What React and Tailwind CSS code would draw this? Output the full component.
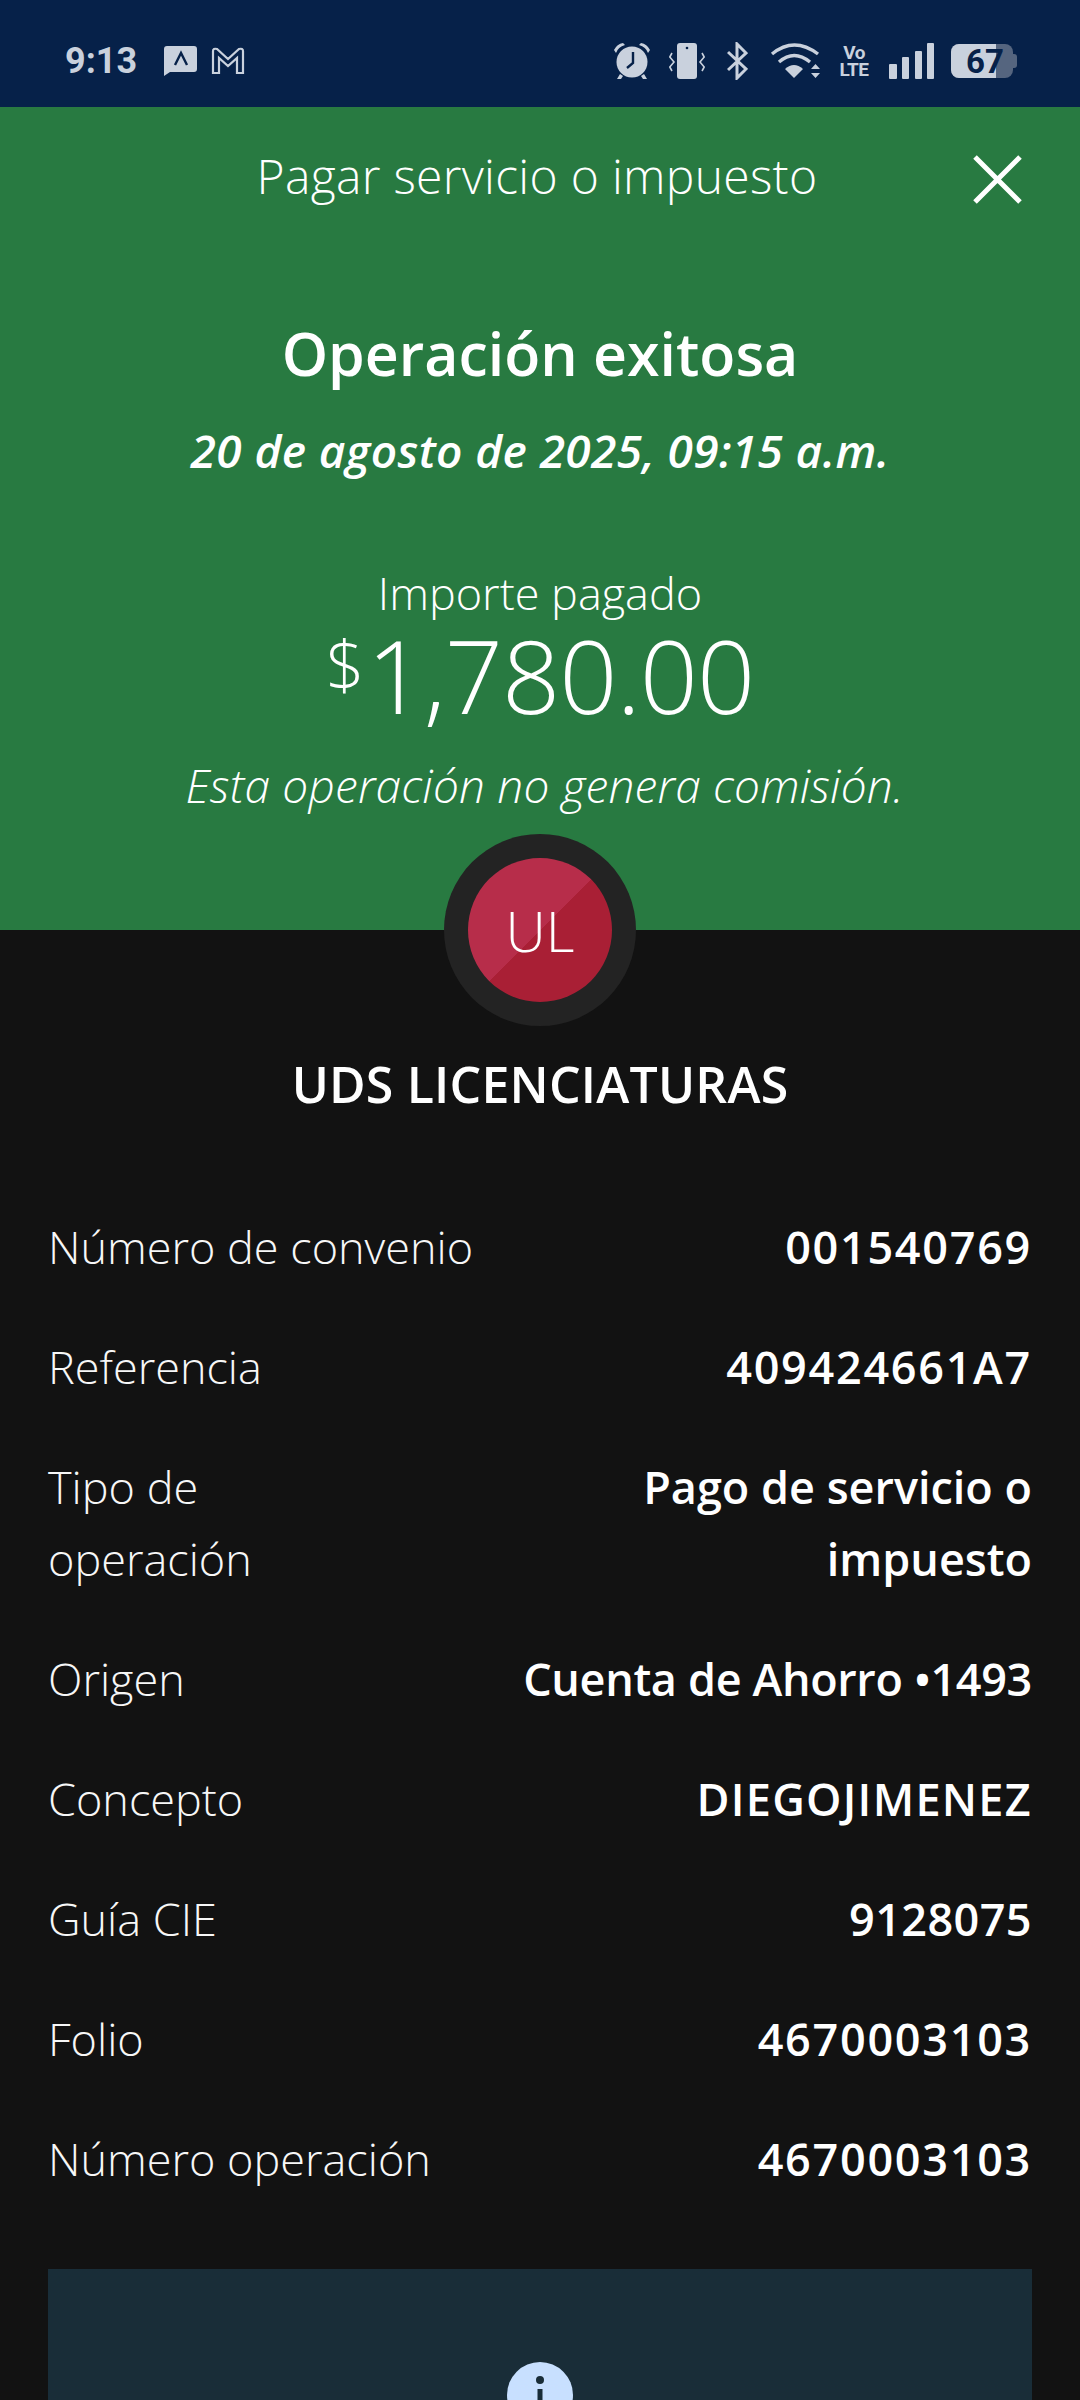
import React from 'react';

const rows = [
  { label: 'Número de convenio', value: '001540769', track: 'tracking-[1.7px]' },
  { label: 'Referencia', value: '409424661A7', track: 'tracking-[1.7px]' },
  { label: 'Tipo de operación', value: 'Pago de servicio o impuesto', wrap: true },
  { label: 'Origen', value: 'Cuenta de Ahorro •1493', track: 'tracking-[-0.35px]' },
  { label: 'Concepto', value: 'DIEGOJIMENEZ', track: 'tracking-[1.3px]' },
  { label: 'Guía CIE', value: '9128075', track: 'tracking-[0.4px]' },
  { label: 'Folio', value: '4670003103', track: 'tracking-[1.7px]' },
  { label: 'Número operación', value: '4670003103', track: 'tracking-[1.7px]' },
];

const StatusIcons = () => (
  <div className="flex items-center text-[#c9d1dd]">
    {/* alarm */}
    <svg width="38" height="38" viewBox="0 0 38 38" fill="currentColor">
      <circle cx="19" cy="20" r="15.5" />
      <path d="M1 8 Q4 2 10 1 L12 3 Q5 5 3 11 Z M37 8 Q34 2 28 1 L26 3 Q33 5 35 11 Z" />
      <path d="M7 32 L4 37 L8 37 L10 34 Z M31 32 L34 37 L30 37 L28 34 Z" />
      <path d="M20 10 L20 21 L14 26" fill="none" stroke="#062149" strokeWidth="2.4" />
    </svg>
    {/* vibrate */}
    <svg className="ml-[18px]" width="36" height="38" viewBox="0 0 36 38" fill="currentColor">
      <rect x="8" y="1" width="20" height="36" rx="3" />
      <circle cx="18" cy="6" r="1.3" fill="#062149" />
      <path d="M3 11 L0.8 15 L5 20 L0.8 25 L3 29 M33 11 L35.2 15 L31 20 L35.2 25 L33 29" fill="none" stroke="currentColor" strokeWidth="1.6" />
    </svg>
    {/* bluetooth */}
    <svg className="ml-[22px]" width="21" height="38" viewBox="0 0 21 38" fill="none" stroke="currentColor" strokeWidth="3">
      <path d="M1 10 L19 27 L10 36 L10 2 L19 11 L1 28" />
    </svg>
    {/* wifi */}
    <svg className="ml-[22px]" width="52" height="38" viewBox="0 0 52 38" fill="none" stroke="currentColor" strokeWidth="3.4">
      <path d="M2 12 Q24 -6 48 12" />
      <path d="M9 20 Q24 7 40 20" />
      <path d="M24 36 L15 27 Q24 19 33 27 Z" fill="currentColor" stroke="none" />
      <path d="M41 27 L45.5 22 L50 27 Z M41 31 L50 31 L45.5 36 Z" fill="currentColor" stroke="none" />
    </svg>
    {/* VoLTE */}
    <div className="ml-[16px] flex flex-col items-center font-['Roboto',sans-serif] font-bold text-[19px] leading-[17px] w-[32px] tracking-[-0.5px]">
      <span>Vo</span>
      <span>LTE</span>
    </div>
    {/* signal */}
    <svg className="ml-[19px]" width="46" height="38" viewBox="0 0 46 38" fill="currentColor">
      <rect x="0" y="22" width="8" height="15" rx="1" />
      <rect x="13" y="15" width="7" height="22" rx="1" />
      <rect x="26" y="9" width="7" height="28" rx="1" />
      <rect x="38" y="1" width="7" height="36" rx="1" />
    </svg>
    {/* battery */}
    <div className="relative w-[66px] h-[34px] ml-[16px]">
      <div className="absolute inset-y-0 left-0 w-[62px] rounded-[8px] bg-[#55657f]" />
      <div className="absolute right-0 top-[10px] w-[4px] h-[14px] rounded-r-[3px] bg-[#55657f]" />
      <div className="absolute inset-y-0 left-0 w-[45px] rounded-l-[8px] bg-[#c9d1dd]" />
      <span className="absolute left-[15px] top-0 font-['Roboto',sans-serif] font-bold text-[33px] leading-[36px] text-[#062149]">67</span>
    </div>
  </div>
);

const StatusBar = () => (
  <div className="h-[107px] bg-[#062149] flex items-center justify-between pl-[65px] pr-[63px] pt-[15px]">
    <div className="flex items-center">
      <span className="font-['Roboto',sans-serif] font-bold text-[36px] text-[#c9d1dd] w-[99px]">9:13</span>
      {/* message bubble */}
      <svg width="34" height="32" viewBox="0 0 34 32" className="mr-[13px]">
        <path d="M3 1 H30 Q33 1 33 4 V24 Q33 27 30 27 H6 L0 31 V4 Q0 1 3 1 Z" fill="#c9d1dd" />
        <path d="M11 20 L17 8 L23 20" fill="none" stroke="#062149" strokeWidth="2.4" />
      </svg>
      {/* gmail */}
      <svg width="34" height="28" viewBox="0 0 34 28" fill="none" stroke="#c9d1dd" strokeWidth="2.2">
        <path d="M2 26 V4 Q2 1 6 2 L17 12 L28 2 Q32 1 32 4 V26 H26 V11 L17 19 L8 11 V26 Z" />
      </svg>
    </div>
    <StatusIcons />
  </div>
);

const Row = ({ label, value, wrap, track }) => (
  <div className="flex justify-between py-[24px] text-[45px] leading-[72px]">
    <span className={`font-light text-[#f7f7f7] ${wrap ? 'w-[260px]' : ''}`}>{label}</span>
    <span className={`font-semibold text-white text-right ${track || ''} ${wrap ? 'w-[440px]' : ''}`}>{value}</span>
  </div>
);

export default function App() {
  return (
    <div className="w-[1080px] h-[2400px] overflow-hidden bg-[#121212] font-['Open_Sans',sans-serif] text-white">
      <StatusBar />

      <div className="h-[823px] bg-[#287a41] flex flex-col items-center relative">
        <div className="w-full flex justify-center pt-[37px] pr-[6px] text-[48px] leading-[64px] font-light tracking-[0.3px]">
          Pagar servicio o impuesto
        </div>
        <svg className="absolute right-[58px] top-[48px]" width="49" height="49" viewBox="0 0 49 49" fill="none" stroke="white" strokeWidth="5">
          <path d="M2 2 L47 47 M47 2 L2 47" />
        </svg>
        <h1 className="mt-[109px] text-[59px] leading-[72px] font-semibold">Operación exitosa</h1>
        <p className="mt-[31px] text-[46px] leading-[60px] font-semibold italic tracking-[0.4px]">20 de agosto de 2025, 09:15 a.m.</p>
        <p className="mt-[83px] text-[45px] leading-[60px] font-light">Importe pagado</p>
        <div className="flex items-start font-light leading-none -mt-[3px]">
          <span className="text-[68px] mt-[10px] mr-[2px]">$</span>
          <span className="text-[102px] leading-[110px] tracking-[-1px]">1,780.00</span>
        </div>
        <p className="mt-[25px] pl-[9px] text-[46px] leading-[60px] font-light italic tracking-[0.2px]">Esta operación no genera comisión.</p>
      </div>

      <div className="relative flex flex-col items-center -mt-[96px]">
        <div className="w-[192px] h-[192px] rounded-full bg-[#232323] flex items-center justify-center">
          <div className="w-[144px] h-[144px] rounded-full bg-[linear-gradient(135deg,#b72d4a_50%,#a91f35_50%)] flex items-center justify-center text-[56px] font-light">
            UL
          </div>
        </div>
        <div className="mt-[26px] text-[50px] leading-[64px] font-semibold tracking-[0.2px]">UDS LICENCIATURAS</div>
      </div>

      <div className="px-[48px] mt-[71px]">
        {rows.map((r) => (
          <Row key={r.label} label={r.label} value={r.value} wrap={r.wrap} track={r.track} />
        ))}
      </div>

      <div className="mx-[48px] mt-[50px] bg-[#192d38] h-[400px] flex justify-center pt-[93px]">
        <svg width="66" height="66" viewBox="0 0 66 66">
          <circle cx="33" cy="33" r="33" fill="#c8e0ff" />
          <circle cx="33" cy="18" r="4" fill="#192d38" />
          <rect x="30.5" y="27" width="5" height="24" fill="#192d38" />
        </svg>
      </div>
    </div>
  );
}
